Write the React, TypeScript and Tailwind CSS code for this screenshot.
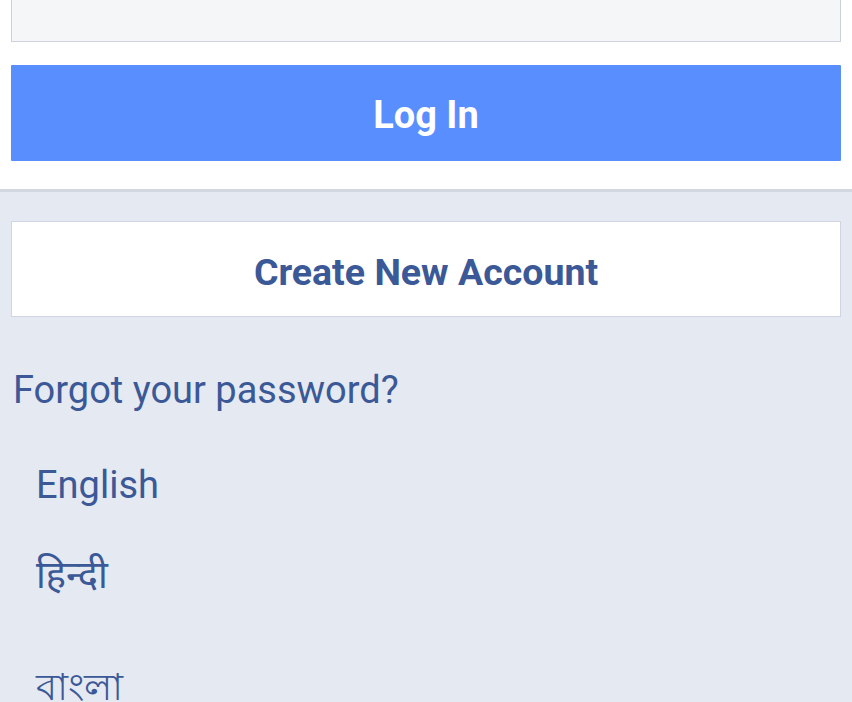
export default function App() {
  return (
    <div className="h-[702px] w-[852px] overflow-hidden bg-[#e5e9f1] font-['Roboto','Noto_Sans',sans-serif]">
      {/* Top form */}
      <div className="bg-white px-[11px] pb-[28px] border-b-[3px] border-[#d3d7e0]">
        <div className="h-[42px] border-x border-b border-[#cdd1dc] bg-[#f5f6f8]" />
        <button className="mt-[23px] flex h-[96px] w-full items-center justify-center rounded-[1px] bg-[#598eff] pt-[5px] text-[38px] font-bold text-white">
          Log In
        </button>
      </div>

      {/* Secondary actions */}
      <div className="px-[11px] pt-[29px]">
        <button className="flex h-[96px] w-full items-center justify-center border border-[#cfd5e4] bg-white pt-[6px] text-[37.5px] font-bold text-[#3b5897]">
          Create New Account
        </button>
        <p className="mt-[52px] pl-[2px] text-[38px] leading-[42px] text-[#3b5897]">
          Forgot your password?
        </p>
        <ul className="mt-[53px] pl-[25px] text-[38px] leading-[42px] text-[#3b5897]">
          <li className="h-[90px]">English</li>
          <li className="h-[112px]">हिन्दी</li>
          <li>বাংলা</li>
        </ul>
      </div>
    </div>
  );
}
